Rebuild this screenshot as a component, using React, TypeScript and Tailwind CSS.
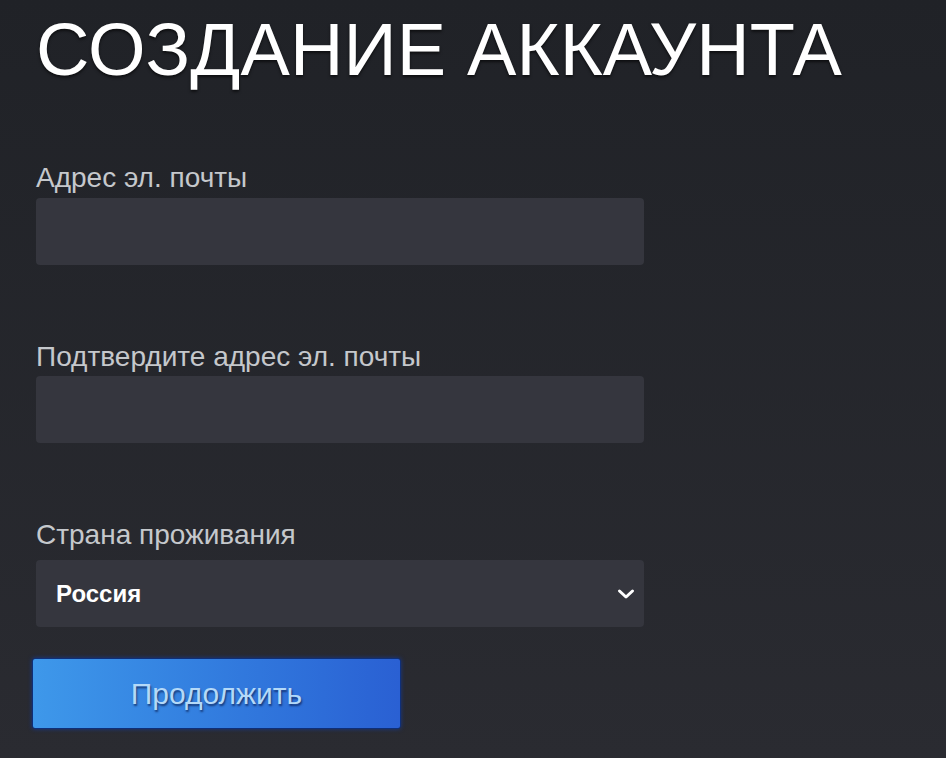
import React from "react";

const Field = ({ label, top, gap }: { label: string; top: string; gap: string }) => {
  return (
    <div className={top}>
      <p className={`text-[#c5c8cc] text-[28px] leading-[30px] ${gap}`}>{label}</p>
      <input
        type="text"
        className="block w-[608px] h-[67px] rounded-[4px] bg-[#35363e] outline-none px-5 text-white text-[22px]"
      />
    </div>
  );
};

const App = () => {
  return (
    <div
      className="min-h-screen w-full bg-gradient-to-b from-[#202227] to-[#2a2b31] pl-[36px] pt-[13px]"
      style={{ fontFamily: '"Liberation Sans", Arial, sans-serif' }}
    >
      <h1 className="text-white text-[74px] leading-[74px] tracking-[0.1px] [text-shadow:0_2px_3px_rgba(0,0,0,0.6)]">
        СОЗДАНИЕ АККАУНТА
      </h1>

      <Field label="Адрес эл. почты" top="mt-[76px]" gap="mb-[5px]" />
      <Field label="Подтвердите адрес эл. почты" top="mt-[77px]" gap="mb-[4px]" />

      <div className="mt-[77px]">
        <p className="text-[#c5c8cc] text-[28px] leading-[30px] mb-[10px]">Страна проживания</p>
        <div className="flex items-center justify-between w-[608px] h-[67px] rounded-[4px] bg-[#35363e] pl-[20px] pr-[9px]">
          <span className="text-white text-[24px] font-bold">Россия</span>
          <svg width="18" height="12" viewBox="0 0 18 12" fill="none">
            <path d="M2.5 3 L9 9 L15.5 3" stroke="white" strokeWidth="3" strokeLinecap="round" strokeLinejoin="round" />
          </svg>
        </div>
      </div>

      <button className="mt-[31px] -ml-[4px] flex items-center justify-center w-[369px] h-[71px] rounded-[3px] bg-gradient-to-r from-[#3e98ea] to-[#2a60d3] border border-[#0f2f78] shadow-[0_0_4px_rgba(20,60,160,0.8)]">
        <span className="text-[#b4d9f8] text-[30px] [text-shadow:1px_2px_2px_rgba(10,30,80,0.7)]">Продолжить</span>
      </button>
    </div>
  );
};

export default App;
